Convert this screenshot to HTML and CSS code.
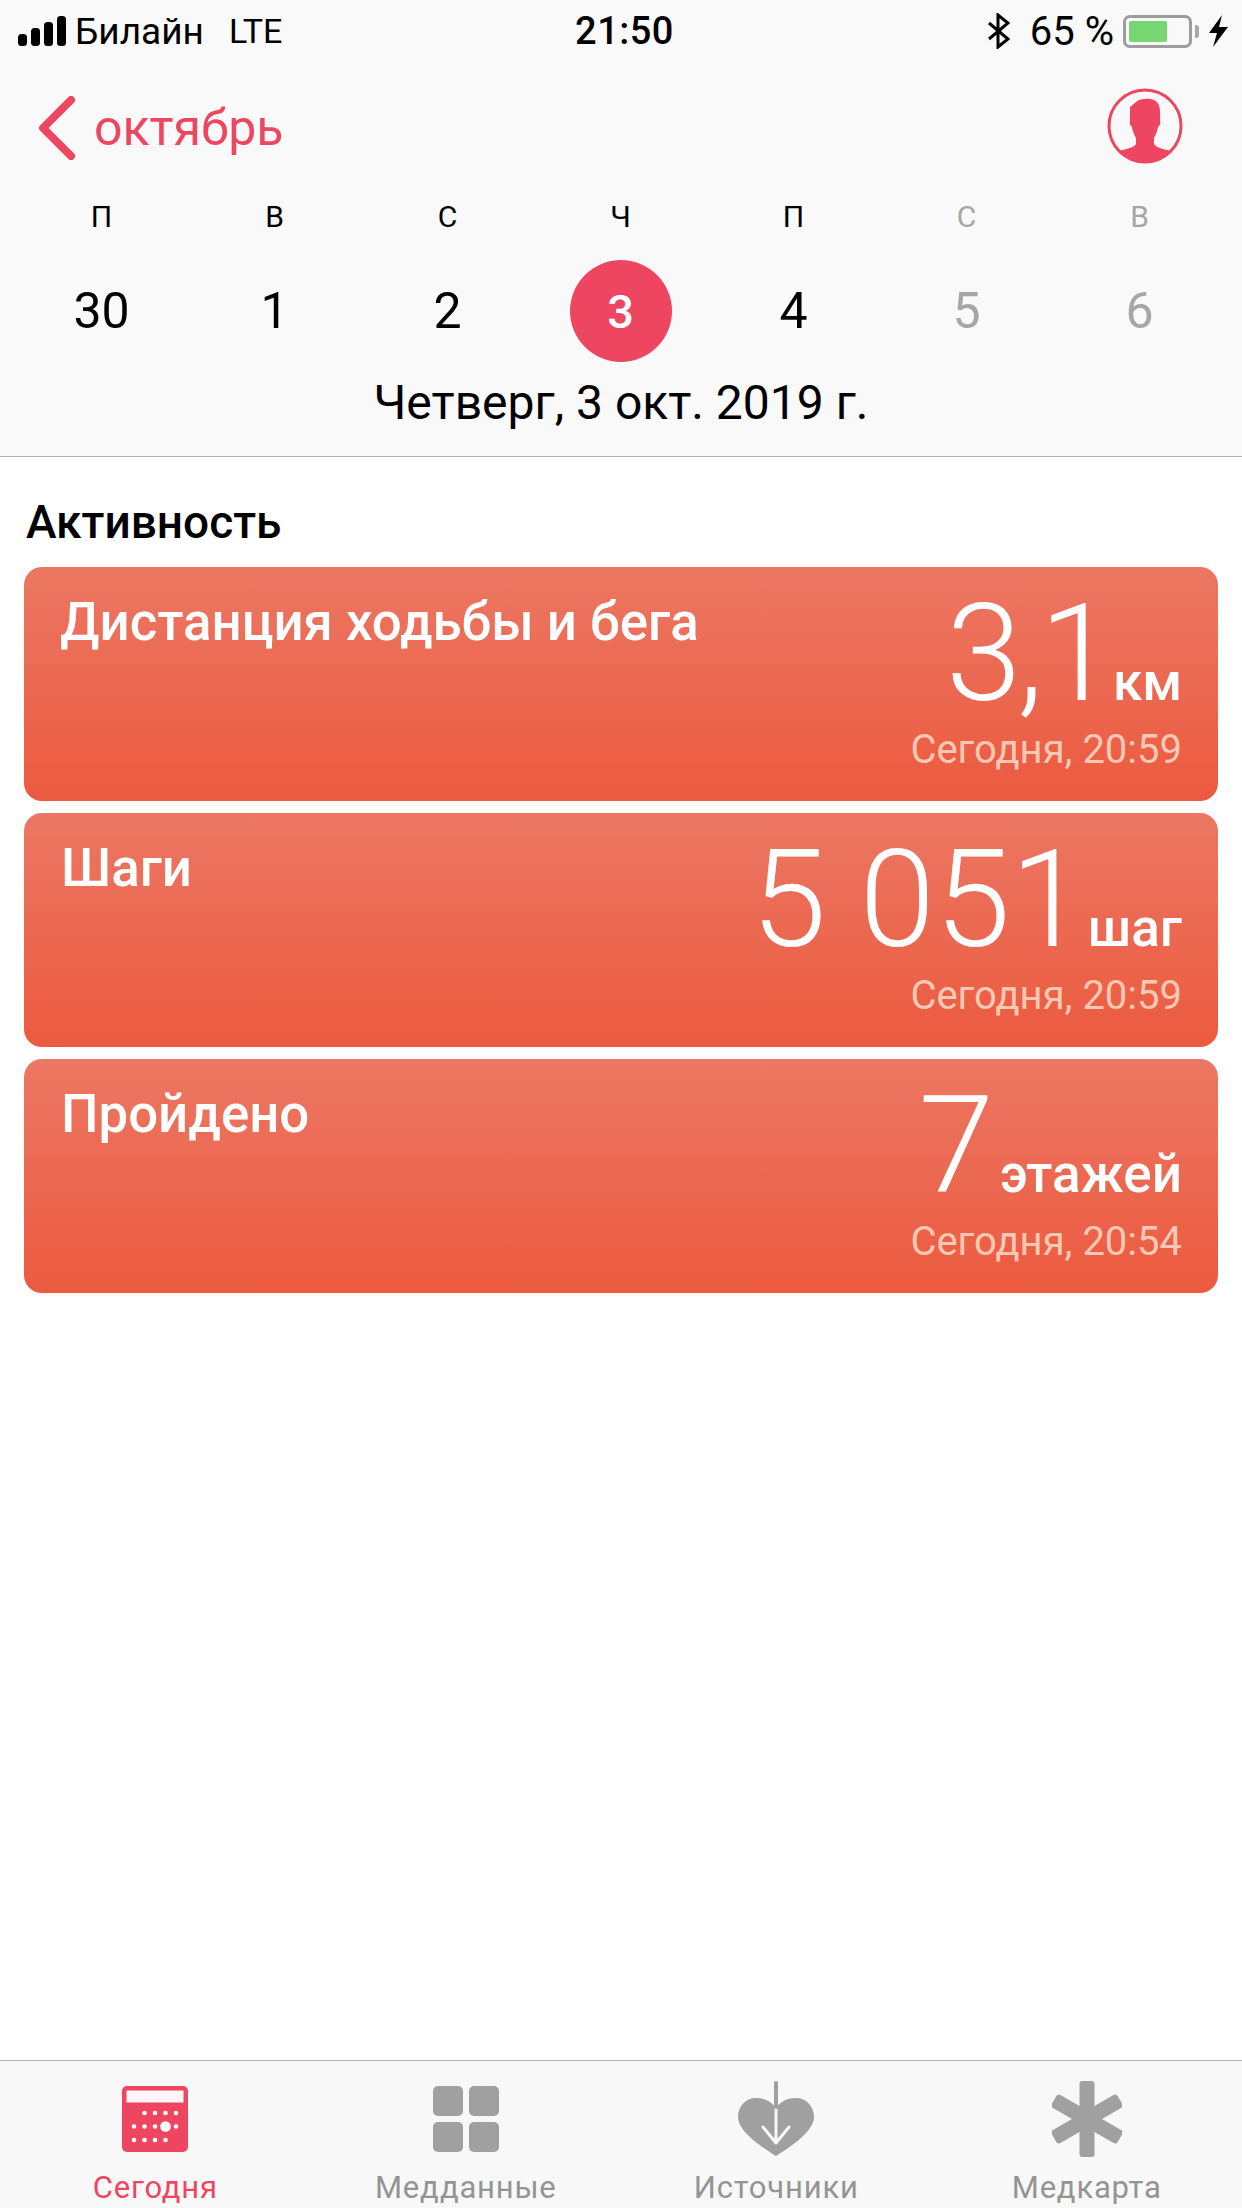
FILE: index.html
```html
<!DOCTYPE html>
<html lang="ru">
<head>
    <meta charset="UTF-8">
    <title>Сегодня</title>
    <link rel="stylesheet" href="styles.css">
</head>
<body>
    <div class="page">
        <header class="top">
            <div class="status">
                <div class="status-left">
                    <svg class="signal" width="48" height="30" viewBox="0 0 48 30" fill="#000">
                        <rect x="0" y="18" width="9" height="12" rx="3.5"/>
                        <rect x="13" y="12" width="9" height="18" rx="3.5"/>
                        <rect x="26" y="6" width="9" height="24" rx="3.5"/>
                        <rect x="39" y="0" width="9" height="30" rx="3.5"/>
                    </svg>
                    <span class="carrier">Билайн</span>
                    <span class="net">LTE</span>
                </div>
                <div class="clock">21:50</div>
                <div class="status-right">
                    <svg class="bt" width="22" height="36" viewBox="0 0 22 36" fill="none" stroke="#000" stroke-width="3">
                        <path d="M1 10 L20 26 L10 34 L10 2 L20 10 L1 26"/>
                    </svg>
                    <span class="battery-text">65 %</span>
                    <div class="battery"><div class="battery-fill"></div></div>
                    <div class="battery-nub"></div>
                    <svg class="bolt" width="19" height="32" viewBox="0 0 19 32" fill="#000">
                        <path d="M13 0 L0 18 L8 18 L4 32 L19 12 L10 12 Z"/>
                    </svg>
                </div>
            </div>

            <div class="nav">
                <div class="back">
                    <svg width="38" height="64" viewBox="0 0 38 64" fill="none" stroke="#ee4660" stroke-width="8" stroke-linecap="round" stroke-linejoin="round">
                        <path d="M33 4 L5 32 L33 60"/>
                    </svg>
                    <span class="back-label">октябрь</span>
                </div>
                <svg class="profile" width="76" height="76" viewBox="0 0 76 76">
                    <defs>
                        <clipPath id="ring"><circle cx="38" cy="38" r="36"/></clipPath>
                    </defs>
                    <circle cx="38" cy="38" r="36" fill="none" stroke="#ee4660" stroke-width="3"/>
                    <path clip-path="url(#ring)" fill="#ee4660" d="M23 19 L29 14 C33 10 43 10 47 12 C51 14 53 18 53 24 L53 33 C54 34 53 38 51 39 C50 45 48 48 47 50 L47 56 C49 60 57 61 64 63 L64 80 L12 80 L12 63 C18 61 27 60 29 56 L29 50 C28 48 26 45 25 39 C23 38 22 34 23 33 Z"/>
                </svg>
            </div>

            <div class="week">
                <div class="day">
                    <span class="day-name">П</span>
                    <span class="day-num">30</span>
                </div>
                <div class="day">
                    <span class="day-name">В</span>
                    <span class="day-num">1</span>
                </div>
                <div class="day">
                    <span class="day-name">С</span>
                    <span class="day-num">2</span>
                </div>
                <div class="day">
                    <span class="day-name">Ч</span>
                    <span class="day-num today">3</span>
                </div>
                <div class="day">
                    <span class="day-name">П</span>
                    <span class="day-num">4</span>
                </div>
                <div class="day off">
                    <span class="day-name">С</span>
                    <span class="day-num">5</span>
                </div>
                <div class="day off">
                    <span class="day-name">В</span>
                    <span class="day-num">6</span>
                </div>
            </div>

            <div class="date-line">Четверг, 3 окт. 2019 г.</div>
        </header>

        <main class="content">
            <h2 class="section-title">Активность</h2>

            <div class="card">
                <div class="card-title">Дистанция ходьбы и бега</div>
                <div class="card-right">
                    <div class="card-value"><span class="num tight">3,1</span><span class="unit">км</span></div>
                    <div class="card-time">Сегодня, 20:59</div>
                </div>
            </div>

            <div class="card">
                <div class="card-title indent">Шаги</div>
                <div class="card-right">
                    <div class="card-value"><span class="num">5 051</span><span class="unit">шаг</span></div>
                    <div class="card-time">Сегодня, 20:59</div>
                </div>
            </div>

            <div class="card">
                <div class="card-title indent">Пройдено</div>
                <div class="card-right">
                    <div class="card-value"><span class="num">7</span><span class="unit wide">этажей</span></div>
                    <div class="card-time">Сегодня, 20:54</div>
                </div>
            </div>
        </main>

        <nav class="tabs">
            <div class="tab active">
                <div class="tab-icon">
                    <svg width="66" height="66" viewBox="0 0 66 66">
                        <rect x="0" y="0" width="66" height="66" rx="5" fill="#ee4660"/>
                        <rect x="4.5" y="4.5" width="57" height="12" fill="#fff" fill-opacity=".95"/>
                        <g fill="#fff">
                            <circle cx="22.5" cy="27" r="2.3"/>
                            <circle cx="33" cy="27" r="2.3"/>
                            <circle cx="43.5" cy="27" r="2.3"/>
                            <circle cx="54" cy="27" r="2.3"/>
                            <circle cx="12" cy="40.5" r="2.3"/>
                            <circle cx="22.5" cy="40.5" r="2.3"/>
                            <circle cx="33" cy="40.5" r="2.3"/>
                            <circle cx="43.5" cy="40.5" r="5.3"/>
                            <circle cx="54" cy="40.5" r="2.3"/>
                            <circle cx="12" cy="54" r="2.3"/>
                            <circle cx="22.5" cy="54" r="2.3"/>
                            <circle cx="33" cy="54" r="2.3"/>
                            <circle cx="43.5" cy="54" r="2.3"/>
                        </g>
                    </svg>
                </div>
                <span class="tab-label">Сегодня</span>
            </div>
            <div class="tab">
                <div class="tab-icon">
                    <svg width="66" height="66" viewBox="0 0 66 66" fill="#a0a0a0">
                        <rect x="0" y="0" width="30" height="30" rx="5"/>
                        <rect x="36" y="0" width="30" height="30" rx="5"/>
                        <rect x="0" y="36" width="30" height="30" rx="5"/>
                        <rect x="36" y="36" width="30" height="30" rx="5"/>
                    </svg>
                </div>
                <span class="tab-label">Медданные</span>
            </div>
            <div class="tab">
                <div class="tab-icon">
                    <svg width="76" height="76" viewBox="0 0 76 76">
                        <path fill="#a0a0a0" d="M38 75 C22 65 0 50 0 36 C0 25 8 17 18 17 C27 17 34 21 38 27 C42 21 49 17 58 17 C68 17 76 25 76 36 C76 50 54 65 38 75 Z"/>
                        <path fill="none" stroke="#f8f8f8" stroke-width="3" stroke-linecap="round" stroke-linejoin="round" d="M38 20 L38 62 M25 46 L38 62 L51 46"/>
                        <path fill="none" stroke="#a0a0a0" stroke-width="4" stroke-linecap="round" d="M38 2 L38 26"/>
                    </svg>
                </div>
                <span class="tab-label">Источники</span>
            </div>
            <div class="tab">
                <div class="tab-icon">
                    <svg width="70" height="76" viewBox="0 0 70 76" fill="#a0a0a0">
                        <rect x="27.5" y="0" width="15" height="76" rx="3"/>
                        <rect x="27.5" y="0" width="15" height="76" rx="3" transform="rotate(60 35 38)"/>
                        <rect x="27.5" y="0" width="15" height="76" rx="3" transform="rotate(-60 35 38)"/>
                    </svg>
                </div>
                <span class="tab-label">Медкарта</span>
            </div>
        </nav>
    </div>
</body>
</html>
```

FILE: styles.css
```css
* {
    box-sizing: border-box;
}
html, body {
    margin: 0;
    padding: 0;
}
body {
    font-family: Roboto, "Noto Sans", sans-serif;
    background-color: #fff;
    color: #000;
}
.page {
    width: 1242px;
    height: 2208px;
    display: flex;
    flex-direction: column;
    overflow: hidden;
}
.top {
    height: 457px;
    background-color: #f9f9f9;
    border-bottom: 1px solid #b4b4b4;
}

/* status bar */
.status {
    position: relative;
    height: 62px;
    display: flex;
    justify-content: space-between;
    align-items: center;
    padding: 0 14px 0 18px;
}
.status-left {
    display: flex;
    align-items: center;
    font-size: 37px;
}
.signal {
    margin-right: 9px;
}
.net {
    margin-left: 25px;
    font-size: 34px;
}
.clock {
    position: absolute;
    left: 7px;
    right: 0;
    text-align: center;
    font-size: 38px;
    letter-spacing: 0.5px;
    font-weight: 500;
    pointer-events: none;
}
.status-right {
    display: flex;
    align-items: center;
    font-size: 40px;
}
.bt {
    margin-right: 20px;
}
.battery-text {
    margin-right: 9px;
}
.battery {
    width: 69px;
    height: 33px;
    border: 3px solid #9c9c9c;
    border-radius: 7px;
    padding: 3px;
}
.battery-fill {
    width: 38px;
    height: 100%;
    background-color: #76d672;
    border-radius: 2px;
}
.battery-nub {
    width: 4px;
    height: 13px;
    margin-left: 3px;
    background-color: #a8a8a8;
    border-radius: 0 3px 3px 0;
}
.bolt {
    margin-left: 10px;
}

/* nav row */
.nav {
    height: 130px;
    display: flex;
    justify-content: space-between;
    align-items: center;
    padding: 2px 59px 0 38px;
}
.back {
    display: flex;
    align-items: center;
    color: #ee4660;
}
.back-label {
    margin-left: 18px;
    font-size: 50px;
    position: relative;
}
.profile {
    margin-bottom: 4px;
}

/* week strip */
.week {
    display: grid;
    grid-template-columns: repeat(7, 173px);
    padding-left: 15px;
}
.day {
    display: flex;
    flex-direction: column;
    align-items: center;
}
.day-name {
    height: 28px;
    line-height: 28px;
    font-size: 30px;
    margin-top: 11px;
}
.day-num {
    width: 102px;
    height: 102px;
    margin-top: 29px;
    border-radius: 50%;
    display: flex;
    align-items: center;
    justify-content: center;
    font-size: 50px;
}
.day-num.today {
    background-color: #ee4660;
    color: #fff;
    font-weight: 500;
    font-size: 47px;
}
.off {
    color: #a6a6a6;
}
.date-line {
    margin-top: 13px;
    text-align: center;
    font-size: 48px;
    line-height: 56px;
}

/* cards */
.content {
    flex: 1;
    padding: 0 24px;
}
.section-title {
    margin: 42px 0 22px 2px;
    font-size: 46px;
    font-weight: 500;
    line-height: 46px;
}
.card {
    height: 234px;
    margin-bottom: 12px;
    border-radius: 18px;
    background: linear-gradient(to bottom, #ec7763, #ec5a3f);
    display: flex;
    justify-content: space-between;
    color: #fff;
    padding: 24px 36px 0 36px;
}
.card-title {
    margin-top: 3px;
    font-size: 52.8px;
    font-weight: 500;
    line-height: 56px;
}
.card-title.indent {
    padding-left: 1px;
}
.card-right {
    display: flex;
    flex-direction: column;
    align-items: flex-end;
}
.card-value {
    height: 118px;
    margin-top: 4px;
    display: flex;
    align-items: baseline;
}
.num {
    font-size: 136px;
    font-weight: 300;
    line-height: 118px;
}
.num.tight {
    letter-spacing: -4px;
}
.unit {
    margin-left: 2px;
    font-size: 53px;
    font-weight: 500;
}
.unit.wide {
    margin-left: 6px;
}
.card-time {
    margin-top: 16px;
    font-size: 40px;
    line-height: 42px;
    color: #fbc9b3;
}

/* tab bar */
.tabs {
    height: 148px;
    border-top: 1px solid #b4b4b4;
    background-color: #f8f8f8;
    display: grid;
    grid-template-columns: repeat(4, 1fr);
}
.tab {
    display: flex;
    flex-direction: column;
    align-items: center;
    color: #949494;
}
.tab.active {
    color: #ee4660;
}
.tab-icon {
    height: 100px;
    display: flex;
    align-items: center;
    justify-content: center;
    padding-top: 16px;
}
.tab-label {
    font-size: 31px;
    line-height: 36px;
    letter-spacing: 0.8px;
    margin-top: 9px;
}
```
